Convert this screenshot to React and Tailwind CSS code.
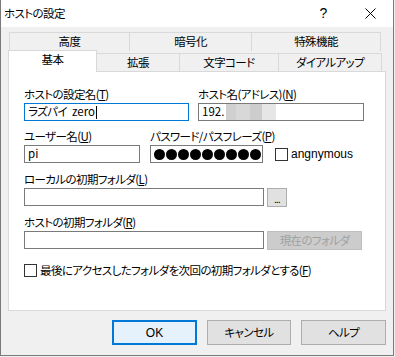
import React from "react";

const F = "font-['Noto_Sans_CJK_JP',sans-serif] [font-feature-settings:'palt']";

function Tab({ label, w, selected, className = "" }) {
  return (
    <div
      className={`flex items-center justify-center border-t border-l border-r border-[#d9d9d9] ${
        selected ? "bg-white" : "bg-[#f0f0f0]"
      } ${className}`}
      style={{ width: w }}
    >
      {label}
    </div>
  );
}

function Label({ children, className = "" }) {
  return <div className={`h-[14px] leading-[14px] whitespace-nowrap ${className}`}>{children}</div>;
}

export default function App() {
  return (
    <div className={`w-[395px] h-[357px] bg-[#f0f0f0] text-[11.5px] tracking-[-0.6px] text-black ${F} flex flex-col`}>
      <div className="w-[394px] h-[356px] border-l border-r border-b border-[#7a7a7a] flex flex-col">
        {/* title bar */}
        <div className="h-[27px] bg-white flex items-center shrink-0">
          <div className="pl-[3px] leading-none">ホストの設定</div>
          <div className="ml-auto w-[46px] text-center text-[14px] mr-[1px] font-['Liberation_Sans',sans-serif]">?</div>
          <div className="w-[46px] flex justify-center">
            <svg width="11" height="11" viewBox="0 0 11 11">
              <path d="M0.5 0.5 L10.5 10.5 M10.5 0.5 L0.5 10.5" stroke="#000" strokeWidth="1" />
            </svg>
          </div>
        </div>

        {/* body */}
        <div className="flex-1 flex flex-col pl-[7px] pr-[7px] pt-[5px]">
          {/* tab row 1 */}
          <div className="flex h-[19px] pl-[1px]">
            <Tab label="高度" w={121} />
            <Tab label="暗号化" w={122} className="border-l-0" />
            <Tab label="特殊機能" w={129} className="border-l-0" />
          </div>
          {/* tab row 2 */}
          <div className="flex h-[21px] items-end relative z-10 -mb-px">
            <Tab label="基本" w={89} selected className="h-[22px] pb-[3px]" />
            <Tab label="拡張" w={83} className="h-[19px] border-b border-b-[#d9d9d9] border-l-0" />
            <Tab label="文字コード" w={99} className="h-[19px] border-b border-b-[#d9d9d9] border-l-0" />
            <Tab label="ダイアルアップ" w={103} className="h-[19px] border-b border-b-[#d9d9d9] border-l-0" />
          </div>

          {/* panel */}
          <div className="w-[378px] h-[240px] bg-white border border-[#d9d9d9] pl-[15px] pt-[15px] flex flex-col">
            <div className="flex">
              <div className="flex flex-col w-[174px]">
                <Label>ホストの設定名(<span className="underline">T</span>)</Label>
                <div className="mt-[2px] w-[165px] h-[18px] border border-[#0078d7] flex items-center pl-[3px]">
                  <span>ラズパイ</span>
                  <span className="tracking-normal ml-[5px]">zero</span>
                  <span className="inline-block w-px h-[13px] bg-black ml-[1px]" />
                </div>
              </div>
              <div className="flex flex-col">
                <Label>ホスト名(アドレス)(<span className="underline">N</span>)</Label>
                <div className="mt-[2px] w-[166px] h-[18px] border border-[#7a7a7a] flex items-center pl-[3px]">
                  <span className="tracking-normal">192.</span>
                  <span className="flex h-[16px] w-[50px] ml-[2px] bg-[#dcdcdc]">
                    <span className="w-[10px] bg-[#d0d0d0]" />
                    <span className="w-[14px] bg-[#d8d8d8]" />
                    <span className="w-[12px] bg-[#cdcdcd]" />
                    <span className="w-[14px] bg-[#e6e6e6]" />
                  </span>
                </div>
              </div>
            </div>

            <div className="flex mt-[8px]">
              <div className="flex flex-col w-[126px]">
                <Label>ユーザー名(<span className="underline">U</span>)</Label>
                <div className="mt-[2px] w-[116px] h-[18px] border border-[#7a7a7a] flex items-center pl-[3px] tracking-normal">pi</div>
              </div>
              <div className="flex flex-col">
                <Label>パスワード/パスフレーズ(<span className="underline">P</span>)</Label>
                <div className="flex items-center mt-[2px]">
                  <div className="w-[113px] h-[18px] border border-[#7a7a7a] flex items-center pl-[3px] gap-[1px] overflow-hidden">
                    {Array.from({ length: 10 }).map((_, i) => (
                      <span key={i} className="shrink-0 w-[11px] h-[11px] rounded-full bg-black" />
                    ))}
                  </div>
                  <div className="ml-[12px] w-[13px] h-[13px] border border-[#333] bg-white" />
                  <span className="ml-[3px] font-['Liberation_Sans',sans-serif] text-[12px] tracking-normal">angnymous</span>
                </div>
              </div>
            </div>

            <Label className="mt-[9px]">ローカルの初期フォルダ(<span className="underline">L</span>)</Label>
            <div className="flex mt-[2px]">
              <div className="w-[240px] h-[18px] border border-[#7a7a7a] bg-white" />
              <div className="ml-[3px] w-[20px] h-[19px] border border-[#adadad] bg-[#e1e1e1] flex items-center justify-center text-[9px] leading-none pt-[3px]">...</div>
            </div>

            <Label className="mt-[8px]">ホストの初期フォルダ(<span className="underline">R</span>)</Label>
            <div className="flex mt-[2px]">
              <div className="w-[240px] h-[18px] border border-[#7a7a7a] bg-white" />
              <div className="ml-[3px] w-[95px] h-[19px] border border-[#bfbfbf] bg-[#cccccc] flex items-center justify-center text-[#a0a0a0]">現在のフォルダ</div>
            </div>

            <div className="flex items-center mt-[12px]">
              <div className="w-[13px] h-[13px] border border-[#333] bg-white" />
              <span className="ml-[3px] whitespace-nowrap">最後にアクセスしたフォルダを次回の初期フォルダとする(<span className="underline">F</span>)</span>
            </div>
          </div>

          {/* buttons */}
          <div className="flex mt-[9px] pl-[104px] gap-[10px]">
            <div className="w-[86px] h-[25px] border-2 border-[#0078d7] bg-[#e5f1fb] flex items-center justify-center font-['Liberation_Sans',sans-serif] tracking-normal text-[12px]">OK</div>
            <div className="w-[85px] h-[25px] border border-[#adadad] bg-[#e1e1e1] flex items-center justify-center">キャンセル</div>
            <div className="w-[86px] h-[25px] border border-[#adadad] bg-[#e1e1e1] flex items-center justify-center">ヘルプ</div>
          </div>
        </div>
      </div>
    </div>
  );
}
